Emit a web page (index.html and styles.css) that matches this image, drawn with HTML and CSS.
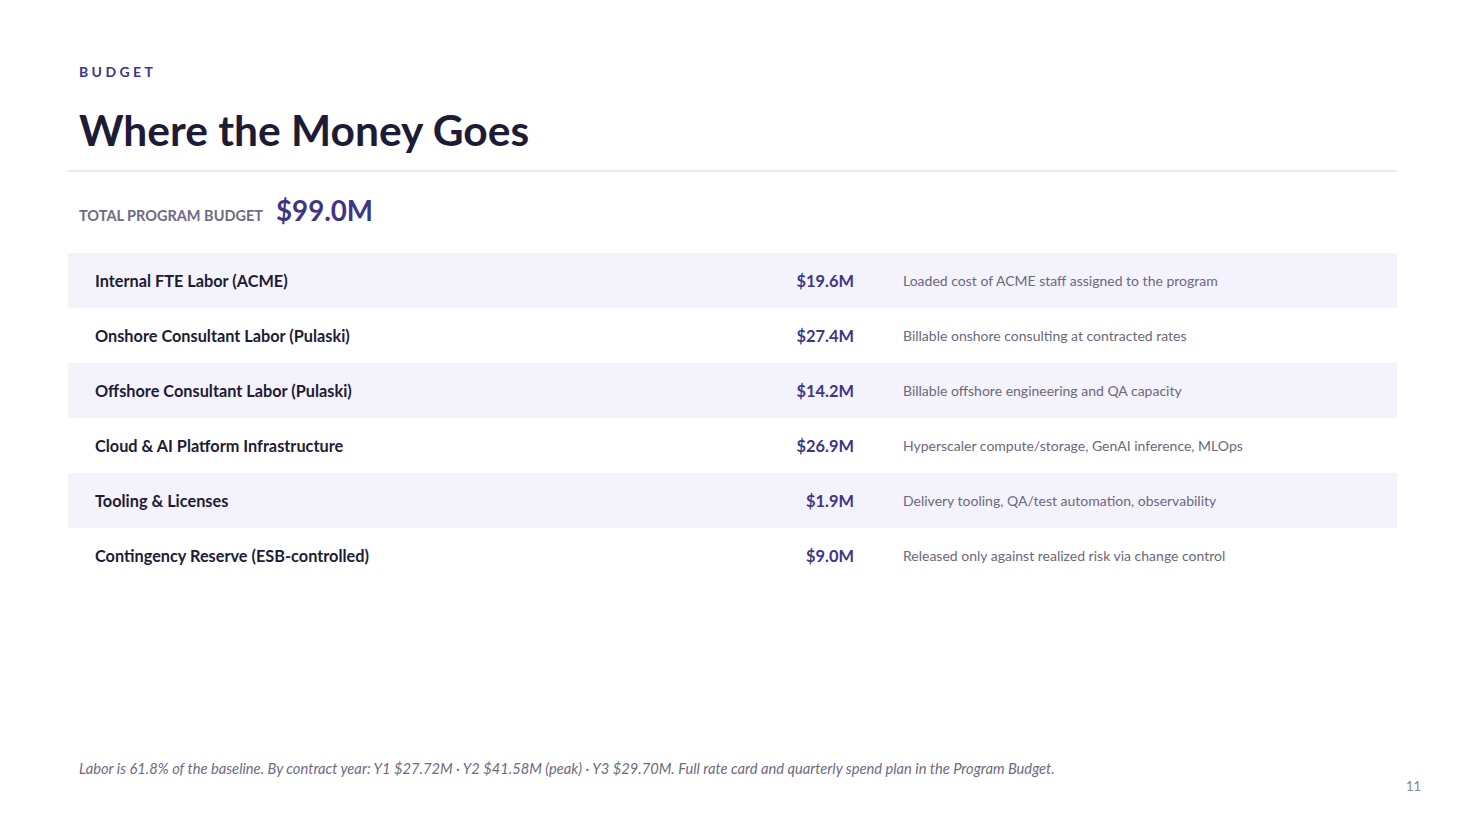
FILE: index.html
```html
<!DOCTYPE html>
<html lang="en">
<head>
<meta charset="utf-8">
<title>Where the Money Goes</title>
<link rel="stylesheet" href="styles.css">
</head>
<body>
<main class="slide">
  <header class="head">
    <div class="eyebrow">BUDGET</div>
    <h1 class="title">Where the Money Goes</h1>
  </header>
  <div class="total">
    <span class="total-label">TOTAL PROGRAM BUDGET</span>
    <span class="total-value">$99.0M</span>
  </div>
  <div class="table">
    <div class="row alt">
      <div class="name">Internal FTE Labor (ACME)</div>
      <div class="amt">$19.6M</div>
      <div class="desc">Loaded cost of ACME staff assigned to the program</div>
    </div>
    <div class="row">
      <div class="name">Onshore Consultant Labor (Pulaski)</div>
      <div class="amt">$27.4M</div>
      <div class="desc">Billable onshore consulting at contracted rates</div>
    </div>
    <div class="row alt">
      <div class="name">Offshore Consultant Labor (Pulaski)</div>
      <div class="amt">$14.2M</div>
      <div class="desc">Billable offshore engineering and QA capacity</div>
    </div>
    <div class="row">
      <div class="name">Cloud &amp; AI Platform Infrastructure</div>
      <div class="amt">$26.9M</div>
      <div class="desc">Hyperscaler compute/storage, GenAI inference, MLOps</div>
    </div>
    <div class="row alt">
      <div class="name">Tooling &amp; Licenses</div>
      <div class="amt">$1.9M</div>
      <div class="desc">Delivery tooling, QA/test automation, observability</div>
    </div>
    <div class="row">
      <div class="name">Contingency Reserve (ESB-controlled)</div>
      <div class="amt">$9.0M</div>
      <div class="desc">Released only against realized risk via change control</div>
    </div>
  </div>
  <footer class="foot">
    <p class="note">Labor is 61.8% of the baseline. By contract year: Y1 $27.72M · Y2 $41.58M (peak) · Y3 $29.70M. Full rate card and quarterly spend plan in the Program Budget.</p>
    <div class="page">11</div>
  </footer>
</main>
</body>
</html>
```

FILE: styles.css
```css
* { box-sizing: border-box; }
html, body { margin: 0; padding: 0; background: #ffffff; }
body { font-family: Lato, "Noto Sans", "Liberation Sans", sans-serif; }

.slide {
  width: 1466px;
  height: 825px;
  padding: 63px 69px 31px 68px;
  display: flex;
  flex-direction: column;
}

.head {
  padding: 0 11px 16px;
  border-bottom: 2px solid #e8e8ee;
}

.eyebrow {
  font-size: 14px;
  line-height: 17px;
  font-weight: 700;
  letter-spacing: 3.4px;
  color: #3d3687;
}

.title {
  margin: 26px 0 0;
  font-size: 42.5px;
  line-height: 48px;
  font-weight: 700;
  color: #1d1b36;
}

.total {
  margin-top: 23px;
  padding: 0 11px;
  display: flex;
  align-items: baseline;
  gap: 13px;
  height: 32px;
  line-height: 32px;
}

.total-label {
  font-size: 14.5px;
  font-weight: 700;
  color: #6e6a85;
}

.total-value {
  font-size: 27.7px;
  font-weight: 700;
  color: #3d3687;
}

.table {
  margin-top: 26px;
  display: flex;
  flex-direction: column;
}

.row {
  height: 55px;
  padding-left: 27px;
  display: grid;
  grid-template-columns: 615px 120px 494px;
  column-gap: 24px;
  align-items: center;
}
.row > .desc { margin-left: 25px; }
.row.alt { background: #f4f3fb; }

.name {
  font-size: 16.3px;
  font-weight: 700;
  color: #1d1b36;
}

.amt {
  text-align: right;
  font-size: 16.4px;
  font-weight: 700;
  color: #3d3687;
}

.desc {
  font-size: 14px;
  color: #6b6880;
  white-space: nowrap;
}

.foot {
  margin-top: auto;
}

.note {
  margin: 0;
  padding: 0 11px;
  font-size: 14.7px;
  line-height: 18px;
  font-style: italic;
  color: #6e6a85;
}

.page {
  margin-top: 1px;
  margin-right: -24px;
  text-align: right;
  font-size: 13px;
  line-height: 16px;
  color: #888694;
}
```
